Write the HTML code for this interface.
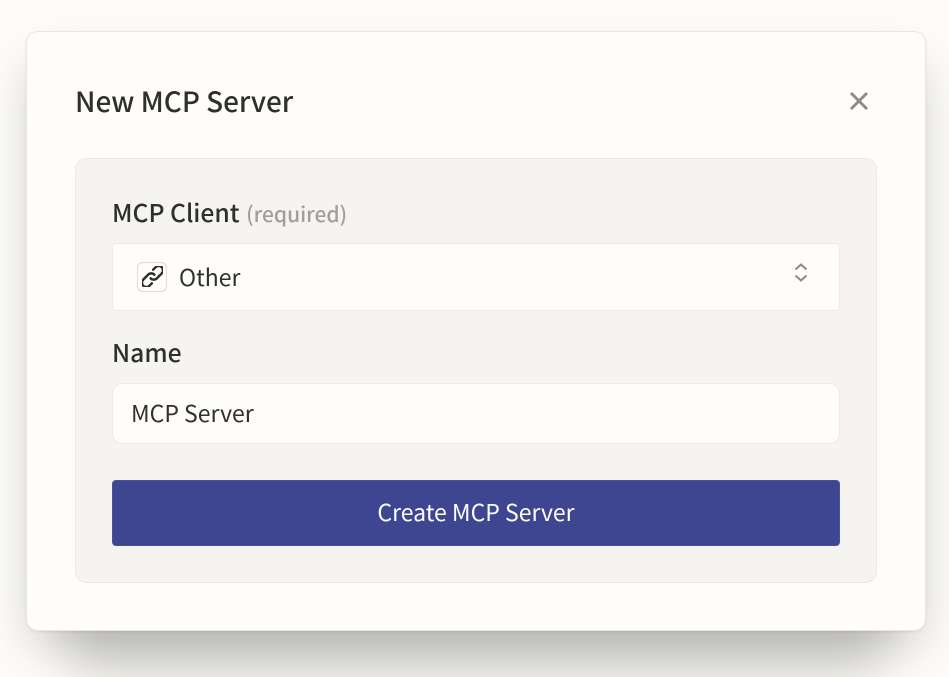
<!DOCTYPE html>
<html><head><meta charset="utf-8"><style>
html,body{margin:0;padding:0;width:949px;height:677px;overflow:hidden;background:#fdfcf8}
body{position:relative;font-family:"Noto Sans CJK SC","Liberation Sans",sans-serif;color:#2f2f2d}
div{position:absolute;box-sizing:border-box}
.t{white-space:nowrap;line-height:30px;height:30px}
#modal{left:26px;top:31px;width:900px;height:600px;background:#fffdf9;border:1px solid #e9e8e3;border-radius:12px;box-shadow:0 1px 2px rgba(0,0,0,.08),0 25px 50px -12px rgba(0,0,0,.25),0 100px 40px -50px rgba(50,50,40,.12)}
#panel{left:75px;top:158px;width:802px;height:425px;background:#f5f4f1;border:1px solid #e9e8e4;border-radius:12px}
.f{left:112px;width:728px;background:#fffdf9;border:1px solid #eceBe7}
</style></head><body>
<div id="modal"></div>
<div class="t" style="left:75px;top:86px;font-size:27.9px;font-weight:500">New MCP Server</div>
<svg style="position:absolute;left:849px;top:91px" width="20" height="20" viewBox="0 0 20 20"><path d="M2 2L18 18M18 2L2 18" stroke="#8c8b87" stroke-width="3" fill="none"/></svg>
<div id="panel"></div>
<div class="t" style="left:112px;top:197px;font-size:24.7px;font-weight:500">MCP Client <span style="font-size:21px;color:#a09f9a;margin-left:1px">(required)</span></div>
<div class="f" style="top:243px;height:68px;border-radius:4px"></div>
<div style="left:137px;top:262px;width:30px;height:30px;border:1px solid #dcdbd7;border-radius:6px;background:#fffdf9"></div>
<svg style="position:absolute;left:142px;top:266px" width="21" height="21" viewBox="0 0 24 24" fill="none" stroke="#2f2f2d" stroke-width="2.8" stroke-linecap="round" stroke-linejoin="round"><g transform="rotate(-45 12 12)"><path d="M6 17H2a5 5 0 0 1 0-10H10a5 5 0 0 1 5 5"/><path d="M18 7H22a5 5 0 0 1 0 10H14a5 5 0 0 1-5-5"/></g></svg>
<div class="t" style="left:179px;top:261px;font-size:23px">Other</div>
<svg style="position:absolute;left:793px;top:262px" width="16" height="21" viewBox="0 0 16 21" fill="none" stroke="#8c8b87" stroke-width="2.1"><path d="M2.5 7.5L8 2.5L13.5 7.5M2.5 13.5L8 18.5L13.5 13.5"/></svg>
<div class="t" style="left:112px;top:337px;font-size:24.7px;font-weight:500">Name</div>
<div class="f" style="top:383px;height:61px;border-radius:10px"></div>
<div class="t" style="left:131px;top:397px;font-size:23px">MCP Server</div>
<div style="left:112px;top:480px;width:728px;height:66px;background:#3e4591;border:1px solid #4a519c;border-radius:4px"></div>
<div class="t" style="left:112px;top:496px;width:728px;text-align:center;font-size:23px;color:#fff">Create MCP Server</div>
</body></html>
